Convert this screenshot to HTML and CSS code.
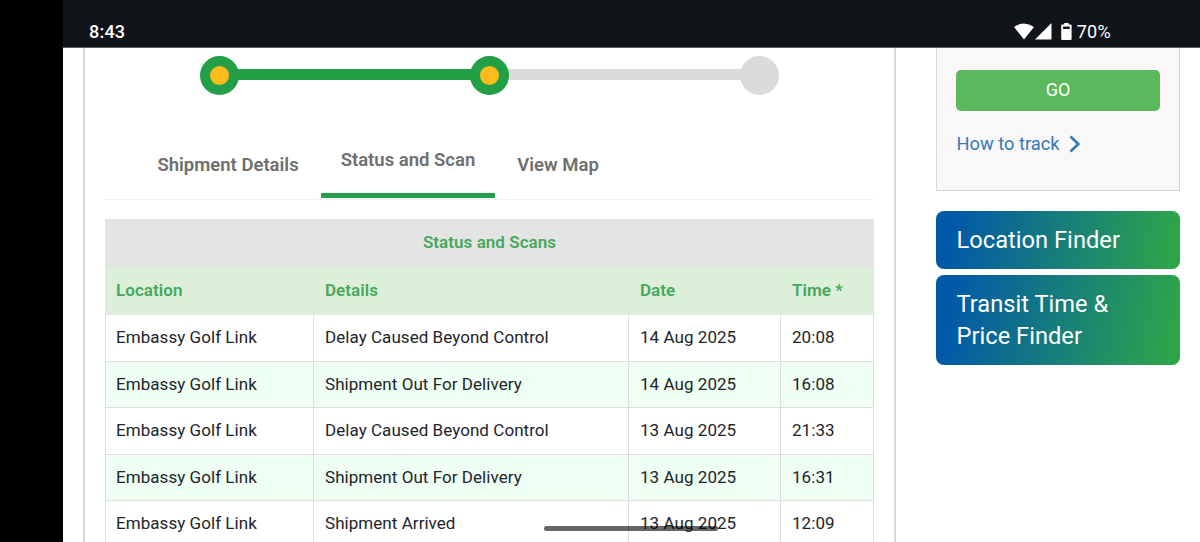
FILE: index.html
```html
<!DOCTYPE html>
<html lang="en">
<head>
  <meta charset="utf-8">
  <title>Track Shipment</title>
  <link rel="stylesheet" href="styles.css">
</head>
<body>

<div class="screen">
  <!-- Status bar -->
  <div class="status-bar">
    <span class="clock">8:43</span>
    <div class="status-icons">
      <svg class="wifi" width="20" height="17" viewBox="0 0 20 17"><path d="M0 4Q10 -3.2 20 4L10 16.6Z" fill="#fff"/></svg>
      <svg class="signal" width="17" height="17" viewBox="0 0 17 17"><path d="M16.5 0V16.5H0Z" fill="#fff"/></svg>
      <svg class="battery" width="11" height="17" viewBox="0 0 11 17"><path fill="#fff" fill-rule="evenodd" d="M3.2 0H7.6V1.5H9.6Q10.6 1.5 10.6 2.5V16Q10.6 17 9.6 17H1.2Q.2 17 .2 16V2.5Q.2 1.5 1.2 1.5H3.2ZM2.1 3.5V6.1H8.7V3.5Z"/></svg>
      <span class="percent">70%</span>
    </div>
  </div>

  <div class="page">
    <main class="tracking">
      <div class="progress">
        <span class="dot done"></span>
        <span class="bar done"></span>
        <span class="dot done"></span>
        <span class="bar"></span>
        <span class="dot"></span>
      </div>

      <nav class="tabs">
        <a class="tab">Shipment Details</a>
        <a class="tab active">Status and Scan</a>
        <a class="tab">View Map</a>
      </nav>

      <table class="scans">
        <colgroup>
          <col class="col-location">
          <col class="col-details">
          <col class="col-date">
          <col class="col-time">
        </colgroup>
        <thead>
          <tr class="title"><th colspan="4">Status and Scans</th></tr>
          <tr class="heads"><th>Location</th><th>Details</th><th>Date</th><th>Time *</th></tr>
        </thead>
        <tbody>
          <tr><td>Embassy Golf Link</td><td>Delay Caused Beyond Control</td><td>14 Aug 2025</td><td>20:08</td></tr>
          <tr><td>Embassy Golf Link</td><td>Shipment Out For Delivery</td><td>14 Aug 2025</td><td>16:08</td></tr>
          <tr><td>Embassy Golf Link</td><td>Delay Caused Beyond Control</td><td>13 Aug 2025</td><td>21:33</td></tr>
          <tr><td>Embassy Golf Link</td><td>Shipment Out For Delivery</td><td>13 Aug 2025</td><td>16:31</td></tr>
          <tr><td>Embassy Golf Link</td><td>Shipment Arrived</td><td>13 Aug 2025</td><td>12:09</td></tr>
        </tbody>
      </table>
    </main>

    <aside class="sidebar">
      <div class="track-box">
        <button class="go">GO</button>
        <a class="how-to">How to track
          <svg width="12" height="18" viewBox="0 0 12 18"><path d="M1.5 1.5L9.3 9L1.5 16.5" fill="none" stroke="#337ab7" stroke-width="2.6"/></svg>
        </a>
      </div>
      <a class="finder">Location Finder</a>
      <a class="finder">Transit Time &amp;<br>Price Finder</a>
    </aside>
  </div>

  <div class="home-bar"></div>
</div>

</body>
</html>
```
FILE: styles.css
```css
* {
  box-sizing: border-box;
}

body {
  margin: 0;
  background-color: #000;
  font-family: Roboto, sans-serif;
  color: #212529;
}

.screen {
  position: relative;
  display: flex;
  flex-direction: column;
  height: 542px;
  margin-left: 63px;
  background-color: #fff;
  overflow: hidden;
}

/* Status bar */
.status-bar {
  display: flex;
  flex: none;
  justify-content: space-between;
  height: 48px;
  padding: 23px 89px 0 26px;
  background-color: #111419;
  border-bottom: 1px solid #5b5c60;
  color: #fff;
}

.clock {
  font-size: 18px;
  line-height: 17px;
  font-weight: 500;
  letter-spacing: 0.2px;
}

.status-icons {
  display: flex;
}

.signal {
  margin-left: 1px;
}

.battery {
  margin-left: 9px;
}

.percent {
  margin-left: 5px;
  font-size: 18px;
  line-height: 18px;
  letter-spacing: 0.3px;
}

.page {
  display: flex;
  flex: 1;
  min-height: 0;
  padding-left: 20px;
}

/* Tracking card */
.tracking {
  width: 813px;
  height: 520px;
  padding: 8px 20px 0;
  border: solid #d9d9db;
  border-width: 0 2px;
}

.progress {
  display: flex;
  align-items: center;
  width: 579px;
  margin-left: 95px;
}

.dot {
  flex: none;
  width: 39px;
  height: 39px;
  border-radius: 50%;
  background-color: #dcdadb;
  z-index: 1;
}

.dot.done {
  border: 10px solid #23a047;
  background-color: #fdbb1c;
}

.bar {
  flex: 1;
  height: 11px;
  margin: 0 -2px 3px;
  background-color: #dcdadb;
}

.bar.done {
  background-color: #23a047;
}

.tabs {
  display: flex;
  align-items: flex-end;
  gap: 2px;
  height: 105px;
  padding-left: 32.4px;
  border-bottom: 1px solid #f1f1f2;
}

.tab {
  height: 50px;
  padding: 5px 20px 0;
  font-size: 18.5px;
  line-height: 22px;
  font-weight: 600;
  color: #6f6f6f;
  white-space: nowrap;
}

.tab.active {
  height: 49px;
  padding-top: 0;
  margin-bottom: 1px;
  border-bottom: 5px solid #23a047;
}

/* Scans table */
.scans {
  width: 768px;
  margin-top: 19px;
  table-layout: fixed;
  border-collapse: collapse;
  font-size: 17px;
  line-height: 20px;
  letter-spacing: 0.05px;
}

.col-location { width: 208px; }
.col-details { width: 315px; }
.col-date { width: 152px; }
.col-time { width: 93px; }

.scans tr {
  height: 47px;
}

.scans .heads {
  height: 48px;
}

.scans tbody tr:nth-child(even) {
  height: 46px;
  background-color: #effff4;
}

.scans th,
.scans td {
  padding: 0 10px 2px 11px;
  border: 1px solid #dcdedf;
  text-align: left;
}

.scans th:first-child,
.scans td:first-child {
  padding-left: 10px;
}

.scans th {
  color: #45a85d;
  font-weight: 600;
}

.scans .title th {
  background-color: #e4e4e4;
  border-color: #e4e4e4;
  text-align: center;
}

.scans .heads th {
  background-color: #ddefd8;
  border-color: #dfecdc;
}

/* Sidebar */
.sidebar {
  width: 244px;
  margin-left: 40px;
}

.track-box {
  height: 143px;
  padding: 22px 19px 0;
  background-color: #f9f7f8;
  border: 1px solid #d9d9db;
  border-top: 0;
}

.go {
  display: block;
  width: 100%;
  height: 41px;
  padding-bottom: 3px;
  border: 0;
  border-radius: 5px;
  background-color: #5cb85c;
  color: #fff;
  font-family: inherit;
  font-size: 18px;
}

.how-to {
  display: flex;
  align-items: center;
  gap: 9px;
  margin-top: 22px;
  padding-left: 0.5px;
  font-size: 18.3px;
  line-height: 22px;
  color: #337ab7;
}

.finder {
  display: block;
  margin-top: 6px;
  padding: 13px 20.5px;
  border-radius: 8px;
  background-image: linear-gradient(100deg, #0059a9 7%, #2ea44a 96%);
  color: #fff;
  font-size: 23.7px;
  line-height: 32px;
}

.track-box + .finder {
  margin-top: 20px;
}

/* Gesture handle over the content */
.home-bar {
  position: absolute;
  left: 481px;
  bottom: 11px;
  width: 174px;
  height: 5px;
  border-radius: 3px;
  background-color: rgba(0, 0, 0, 0.6);
}
```
